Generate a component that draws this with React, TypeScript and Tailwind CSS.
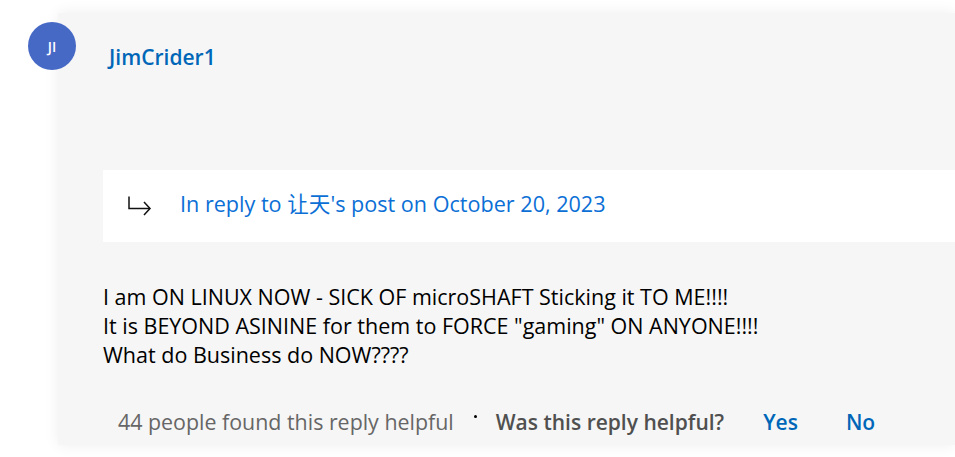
import React from "react";

export default function App() {
  const font = { fontFamily: '"Open Sans", "Noto Sans CJK SC", sans-serif' };
  return (
    <div className="relative h-[457px] w-[955px] overflow-hidden bg-white" style={font}>
      <div className="pl-[58px] pt-[13px]">
        <div className="h-[432px] bg-[#f6f6f6] pl-[45px] shadow-[0_0_14px_rgba(0,0,0,0.07)]">
          <div className="pt-[30px] pl-[6px] text-[21px] font-semibold leading-[28px] text-[#0067b8]">
            JimCrider1
          </div>
          <div className="mt-[99px] flex h-[72px] items-center bg-white pl-[25px]">
            <svg width="24" height="20" viewBox="0 0 24 20" fill="none" stroke="#111" strokeWidth="1.5">
              <path d="M1 0.5 V12.5 H22" />
              <path d="M16 6 L22 12.5 L16 19" />
            </svg>
            <span className="ml-[28px] mt-[-4px] text-[21.6px] leading-[28px] text-[#0b6fd6]">
              In reply to 让天's post on October 20, 2023
            </span>
          </div>
          <div className="mt-[40px] text-[21.5px] leading-[29px] text-black">
            <div>I am ON LINUX NOW - SICK OF microSHAFT Sticking it TO ME!!!!</div>
            <div>It is BEYOND ASININE for them to FORCE "gaming" ON ANYONE!!!!</div>
            <div>What do Business do NOW????</div>
          </div>
          <div className="mt-[39px] flex items-center pl-[15px] text-[21.4px] leading-[28px]">
            <span className="text-[#666666]">44 people found this reply helpful</span>
            <span className="ml-[20px] mb-[12px] h-[3px] w-[3px] rounded-full bg-black" />
            <span className="ml-[19px] text-[21px] font-semibold text-[#505050]">Was this reply helpful?</span>
            <span className="ml-[39px] text-[21px] font-semibold text-[#0067b8]">Yes</span>
            <span className="ml-[48px] text-[21px] font-semibold text-[#0067b8]">No</span>
          </div>
        </div>
      </div>
      <div className="absolute left-[28px] top-[22px] flex h-[48px] w-[48px] items-center justify-center rounded-full bg-[#4769c6] text-[14px] font-semibold text-white">
        JI
      </div>
    </div>
  );
}
